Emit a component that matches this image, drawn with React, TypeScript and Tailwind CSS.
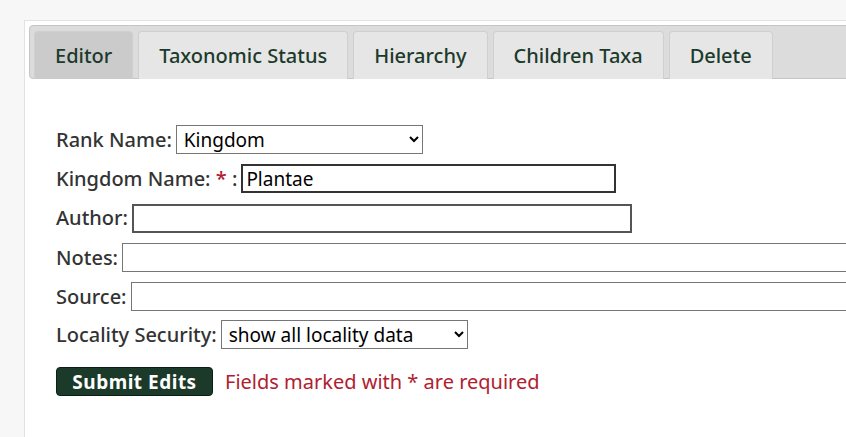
export default function App() {
  const tabs = ["Editor", "Taxonomic Status", "Hierarchy", "Children Taxa", "Delete"];
  const label = "text-[20px] font-medium text-[#333] mr-[4px] whitespace-nowrap";
  const inp = "h-[29px] px-[3px] text-[19px] text-black bg-white font-['Liberation_Sans',Arial,sans-serif]";
  return (
    <div className="w-[846px] h-[437px] overflow-hidden bg-[#f7f7f7] pt-[20px] pl-[24px] font-['Open_Sans',sans-serif]">
      <div className="w-[900px] h-[430px] bg-white border border-[#e2e2e2] pt-[4px] pl-[4px]">
        <div className="flex gap-[5px] h-[54px] bg-[#dcdcdc] border border-[#c5c5c5] rounded-[4px] pt-[5px] pl-[4px]">
          {tabs.map((t, i) => (
            <div
              key={t}
              className={`h-[48px] px-[20px] flex items-center text-[20px] font-medium text-[#1c3a2b] rounded-t-[4px] border border-b-0 border-[#cfcfcf] ${i === 0 ? "bg-[#cbcbcb]" : "bg-[#e6e6e6]"}`}
            >
              {t}
            </div>
          ))}
        </div>
        <div className="pl-[27px] pt-[48px] flex flex-col">
          <div className="flex items-center h-[25px] mb-[12px]">
            <span className={label}>Rank Name:</span>
            <select className={`${inp} h-[26px] w-[247px] border border-[#767676]`} defaultValue="Kingdom">
              <option>Kingdom</option>
            </select>
          </div>
          <div className="flex items-center h-[29px] mb-[10px]">
            <span className={label}>
              Kingdom Name: <span className="text-[#b02030]">*</span> :
            </span>
            <input className={`${inp} w-[375px] border-2 border-[#333]`} defaultValue="Plantae" />
          </div>
          <div className="flex items-center h-[30px] mb-[10px]">
            <span className={label}>Author:</span>
            <input className={`${inp} w-[500px] border-2 border-[#555]`} />
          </div>
          <div className="flex items-center h-[29px] mb-[10px]">
            <span className={label}>Notes:</span>
            <input className={`${inp} w-[760px] border border-[#767676]`} />
          </div>
          <div className="flex items-center h-[29px] mb-[10px]">
            <span className={label}>Source:</span>
            <input className={`${inp} w-[760px] border border-[#767676]`} />
          </div>
          <div className="flex items-center h-[27px] mb-[19px]">
            <span className={label}>Locality Security:</span>
            <select className={`${inp} h-[27px] w-[247px] border border-[#767676]`} defaultValue="a">
              <option value="a">show all locality data</option>
            </select>
          </div>
          <div className="flex items-center h-[29px]">
            <button className="h-[29px] w-[157px] rounded-[4px] bg-[#1b3a2a] border border-[#0c1f15] text-white font-bold text-[19px] tracking-[0.5px] font-['Liberation_Sans',Arial,sans-serif]">
              Submit Edits
            </button>
            <span className="ml-[12px] text-[20px] text-[#b02030]">Fields marked with * are required</span>
          </div>
        </div>
      </div>
    </div>
  );
}
